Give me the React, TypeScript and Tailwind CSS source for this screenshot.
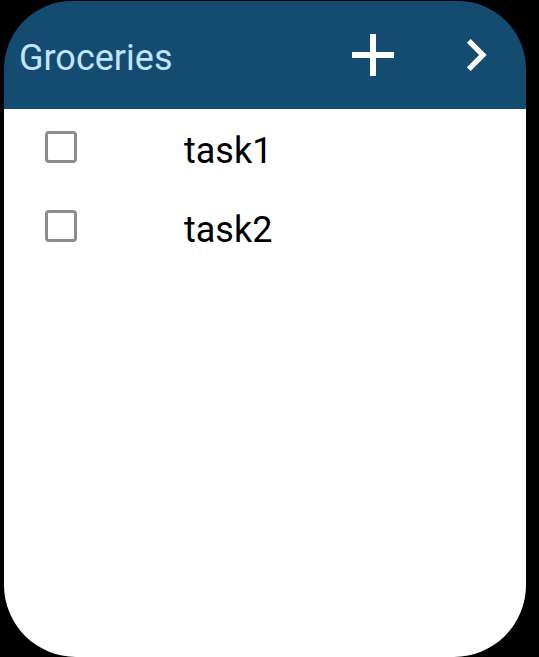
import { useState } from "react";

const initialTasks = [
  { id: "task1", label: "task1", done: false },
  { id: "task2", label: "task2", done: false },
];

function Header({ title }: { title: string }) {
  return (
    <header className="flex h-[108px] items-center bg-[#144b71] pl-[15px] pr-[18px]">
      <h1 className="flex-1 pt-1.5 text-[36px] leading-[44px] text-[#c2e4ff]">{title}</h1>
      <button type="button" aria-label="Add task" className="mr-[35px] text-white">
        <svg viewBox="0 0 24 24" className="size-[72px]" fill="currentColor" aria-hidden="true">
          <path d="M19 13h-6v6h-2v-6H5v-2h6V5h2v6h6z" />
        </svg>
      </button>
      <button type="button" aria-label="Next list" className="text-white">
        <svg viewBox="0 0 24 24" className="size-16" fill="currentColor" aria-hidden="true">
          <path d="M10 6 8.59 7.41 13.17 12l-4.58 4.59L10 18l6-6z" />
        </svg>
      </button>
    </header>
  );
}

export default function App() {
  const [tasks, setTasks] = useState(initialTasks);

  const toggle = (id: string) =>
    setTasks(tasks.map((t) => (t.id === id ? { ...t, done: !t.done } : t)));

  return (
    <div className="flex min-h-screen bg-black pl-1 pr-[13px] pt-px font-[Roboto,sans-serif]">
      <main className="flex flex-1 flex-col overflow-hidden rounded-t-[68px] rounded-b-[72px]">
        <Header title="Groceries" />
        <ul className="flex-1 bg-white">
          {tasks.map((task) => (
            <li key={task.id} className="flex h-[79px] items-start pl-[41px]">
              <input
                id={task.id}
                type="checkbox"
                checked={task.done}
                onChange={() => toggle(task.id)}
                className="mt-[22px] size-8 appearance-none rounded-[4px] border-3 border-[#8c8c8c] bg-white checked:bg-[#144b71]"
              />
              <label htmlFor={task.id} className="pl-[107px] pt-5 text-[36px] leading-[44px] text-black">
                {task.label}
              </label>
            </li>
          ))}
        </ul>
      </main>
    </div>
  );
}
